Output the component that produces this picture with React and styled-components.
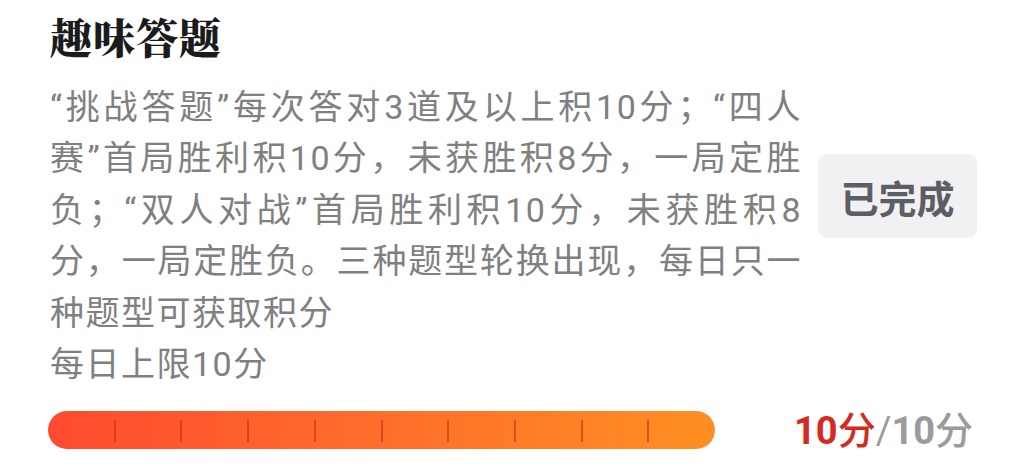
import React from "react";
import styled, { createGlobalStyle } from "styled-components";

const Global = createGlobalStyle`
  html, body { margin: 0; padding: 0; background: #ffffff; }
  body { font-family: Roboto, "Noto Sans CJK SC", sans-serif; }
`;

const Card = styled.div`
  width: 1025px;
  box-sizing: border-box;
  padding: 8px 48px 0 50px;
  display: flex;
  flex-direction: column;
`;

const Top = styled.div`
  display: flex;
  align-items: center;
  gap: 16px;
`;

const Info = styled.div`
  width: 752px;
  display: flex;
  flex-direction: column;
  gap: 18px;
`;

const Title = styled.h1`
  margin: 0;
  font-family: "Noto Serif CJK SC", "Noto Sans CJK SC", serif;
  font-size: 42px;
  line-height: 56px;
  font-weight: 900;
  letter-spacing: 1px;
  color: #1b1b1d;
`;

const Desc = styled.div`
  font-family: Roboto, "Noto Sans CJK SC", sans-serif;
  font-size: 34px;
  line-height: 51.4px;
  color: #808080;
  letter-spacing: 1.5px;
`;

const Line = styled.div`
  white-space: ${(p) => (p.$full ? "normal" : "nowrap")};
  text-align: ${(p) => (p.$full ? "justify" : "left")};
  text-align-last: ${(p) => (p.$full ? "justify" : "auto")};
  text-justify: inter-character;
`;

const DoneButton = styled.button`
  width: 159px;
  height: 84px;
  flex: none;
  border: none;
  border-radius: 9px;
  background: #f1f1f4;
  color: #5b5e65;
  font-family: "Noto Sans CJK SC", sans-serif;
  font-size: 38px;
  font-weight: 700;
  padding: 0;
  margin-bottom: 6px;
`;

const ProgressRow = styled.div`
  margin-top: 17px;
  display: flex;
  align-items: center;
  justify-content: space-between;
`;

const Bar = styled.div`
  position: relative;
  margin-left: -2px;
  width: 667px;
  height: 38px;
  border-radius: 19px;
  background: linear-gradient(90deg, #ff4a2f 0%, #ff6b2c 45%, #ff8f22 100%);
`;

const Tick = styled.span`
  position: absolute;
  top: 9px;
  width: 2px;
  height: 22px;
  margin-left: -1px;
  background: rgba(200, 45, 20, 0.6);
`;

const Score = styled.div`
  font-family: Roboto, "Noto Sans CJK SC", sans-serif;
  font-size: 38px;
  line-height: 42px;
  margin-right: 4px;
  color: #9b9b9b;
  white-space: nowrap;
`;

const Num = styled.span`
  font-weight: 700;
  color: ${(p) => (p.$active ? "#d52b1e" : "#9b9b9b")};
`;

const Unit = styled.span`
  font-family: "Noto Sans CJK SC", sans-serif;
  font-weight: 500;
  color: ${(p) => (p.$active ? "#d52b1e" : "#9b9b9b")};
`;

const lines = [
  "“挑战答题”每次答对3道及以上积10分；“四人",
  "赛”首局胜利积10分，未获胜积8分，一局定胜",
  "负；“双人对战”首局胜利积10分，未获胜积8",
  "分，一局定胜负。三种题型轮换出现，每日只一",
];

export default function App() {
  return (
    <>
      <Global />
      <Card>
        <Top>
          <Info>
            <Title>趣味答题</Title>
            <Desc>
              {lines.map((l) => (
                <Line key={l} $full>
                  {l}
                </Line>
              ))}
              <Line>种题型可获取积分</Line>
              <Line>每日上限10分</Line>
            </Desc>
          </Info>
          <DoneButton>已完成</DoneButton>
        </Top>
        <ProgressRow>
          <Bar>
            {Array.from({ length: 9 }, (_, i) => (
              <Tick key={i} style={{ left: `${(i + 1) * 10}%` }} />
            ))}
          </Bar>
          <Score>
            <Num $active>10</Num>
            <Unit $active>分</Unit>/<Num>10</Num>
            <Unit>分</Unit>
          </Score>
        </ProgressRow>
      </Card>
    </>
  );
}
